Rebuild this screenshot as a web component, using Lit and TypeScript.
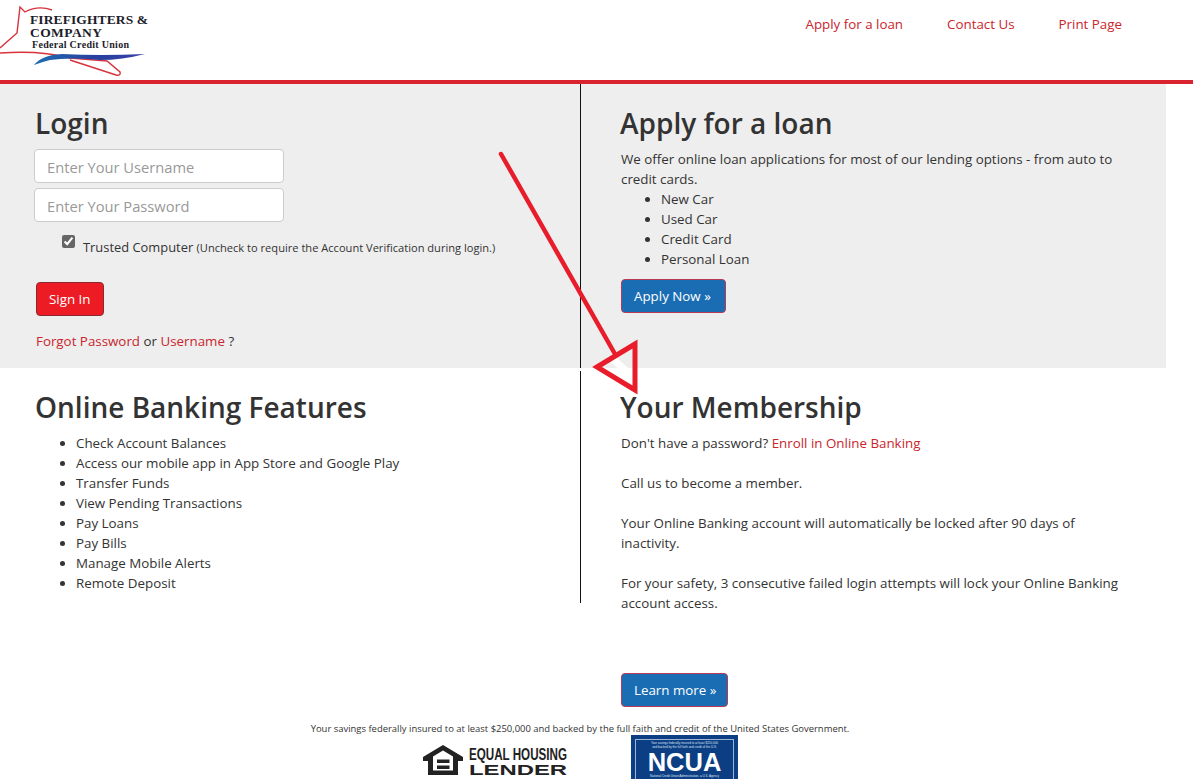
import { LitElement, html, css, svg } from 'lit';
import { customElement } from 'lit/decorators.js';

const FEATURES = [
  'Check Account Balances',
  'Access our mobile app in App Store and Google Play',
  'Transfer Funds',
  'View Pending Transactions',
  'Pay Loans',
  'Pay Bills',
  'Manage Mobile Alerts',
  'Remote Deposit',
];

const LOANS = ['New Car', 'Used Car', 'Credit Card', 'Personal Loan'];

const logo = svg`
  <svg class="logo" width="150" height="80" viewBox="0 0 150 80">
    <defs>
      <linearGradient id="swoosh" x1="0" x2="1" y1="0" y2="0">
        <stop offset="0" stop-color="#1f6fb0" />
        <stop offset="0.55" stop-color="#27409f" />
        <stop offset="1" stop-color="#3a3fa8" />
      </linearGradient>
    </defs>
    <path d="M0 48 L17 33 L20 7 L25 12 Q38 5 52 10" fill="none" stroke="#d8323c" stroke-width="1.4" />
    <path d="M0 53 Q40 50 70 58 L107 61 L120 72 Q121 76 116 75 L70 60" fill="none" stroke="#d8323c" stroke-width="1.4" />
    <path d="M34 65 Q42 55 62 54 Q100 56 145 54 Q122 60 100 60 Q70 57 50 60 Q42 62 34 65 Z" fill="url(#swoosh)" />
    <text x="30" y="24" class="l1" textLength="118" lengthAdjust="spacing">FIREFIGHTERS &amp;</text>
    <text x="30" y="37" class="l1" textLength="72" lengthAdjust="spacing">COMPANY</text>
    <text x="32" y="48" class="l2" textLength="97" lengthAdjust="spacing">Federal Credit Union</text>
  </svg>
`;

const housing = svg`
  <svg class="ehl" width="146" height="34" viewBox="0 0 146 34">
    <path d="M20 2 L40 14 L40 18 L35 18 L35 32 L5 32 L5 18 L0 18 L0 14 Z M20 7.5 L10 13.5 L10 27.5 L30 27.5 L30 13.5 Z" fill="#222" fill-rule="evenodd" />
    <rect x="14" y="16.5" width="12.5" height="3.5" fill="#222" />
    <rect x="14" y="22.5" width="12.5" height="3.5" fill="#222" />
    <text x="46" y="17" class="e1" textLength="98" lengthAdjust="spacingAndGlyphs">EQUAL HOUSING</text>
    <text x="46" y="32" class="e2" textLength="98" lengthAdjust="spacingAndGlyphs">LENDER</text>
  </svg>
`;

const arrow = svg`
  <svg class="arrow" width="1193" height="779" viewBox="0 0 1193 779">
    <path d="M615 356 L628 368 L623 372 L610 362 Z" fill="#fff" />
    <path d="M501 154 L615 354" fill="none" stroke="#e81c2a" stroke-width="4.5" stroke-linecap="round" />
    <path d="M597 367 L635 344 L635 390 Z" fill="none" stroke="#e81c2a" stroke-width="5" />
  </svg>
`;

@customElement('app-root')
export class AppRoot extends LitElement {
  static styles = css`
    :host {
      display: block;
      position: relative;
      height: 779px;
      overflow: hidden;
      background: #fff;
      color: #333;
      font-family: 'Open Sans', 'Noto Sans', sans-serif;
      font-size: 13.35px;
      line-height: 20px;
    }

    a {
      color: #c9252d;
      text-decoration: none;
    }

    header {
      display: flex;
      justify-content: space-between;
      height: 80px;
      border-bottom: 4px solid #d9232e;
    }

    .logo {
      display: block;
    }

    .logo .l1 {
      font: bold 13.5px 'Liberation Serif', serif;
      fill: #1d1d2b;
    }

    .logo .l2 {
      font: bold 10px 'Liberation Serif', serif;
      fill: #1d1d2b;
    }

    nav {
      display: flex;
      gap: 44px;
      padding: 14px 71px 0 0;
    }

    .row {
      display: grid;
      grid-template-columns: 581px 1fr;
      width: 1166px;
    }

    .row.top {
      background: #eee;
      height: 284px;
    }

    .left {
      padding-left: 36px;
      border-right: 1px solid #111;
    }

    .right {
      padding: 0 40px;
    }

    .top .left,
    .top .right {
      padding-top: 19px;
    }

    .bottom {
      padding-top: 3px;
    }

    .bottom .left {
      height: 216px;
      padding-top: 16px;
    }

    .bottom .right {
      padding-top: 16px;
    }

    h2 {
      margin: 0 0 6px -1px;
      font-size: 28px;
      font-weight: 600;
      line-height: 40px;
      color: #333;
    }

    p {
      margin: 0;
    }

    ul {
      margin: 0;
      padding-left: 40px;
    }

    .form {
      display: flex;
      flex-direction: column;
      gap: 5px;
      margin: 2px 0 0 -2px;
    }

    input.text {
      box-sizing: border-box;
      width: 250px;
      height: 34px;
      padding: 1px 12px 0;
      border: 1px solid #ccc;
      border-radius: 4px;
      background: #fff;
      font: inherit;
      font-size: 14.7px;
    }

    input.text::placeholder {
      color: #999;
    }

    .trust {
      display: flex;
      align-items: flex-start;
      margin: 15px 0 0 26px;
      font-size: 12.9px;
    }

    .trust input {
      width: 13px;
      height: 13px;
      margin: -2px 8px 0 0;
      accent-color: #666;
    }

    .trust small {
      font-size: 11.1px;
    }

    .btn {
      display: inline-block;
      box-sizing: border-box;
      height: 34px;
      padding: 0 12px;
      border: 1px solid #b83a55;
      border-radius: 4px;
      background: #1a6db3;
      color: #fff;
      line-height: 32px;
    }

    .btn.red {
      background: #ed1c24;
      border-color: #8a2a30;
    }

    .signin {
      margin: 24px 0 15px;
    }

    .apply {
      margin-top: 10px;
    }

    .apply .btn {
      padding-right: 14px;
    }

    .gap {
      margin-top: 20px;
    }

    .more {
      margin-top: 60px;
    }

    .more .btn {
      padding-right: 11px;
    }

    footer {
      width: 1160px;
      margin-top: 14px;
      text-align: center;
      font-size: 9.45px;
      line-height: 16px;
    }

    .logos {
      display: flex;
      align-items: flex-start;
      gap: 62px;
      margin: -2px 0 0 423px;
    }

    .ehl {
      display: block;
      margin-top: 8px;
    }

    .ehl .e1 {
      font: bold 16px 'Liberation Sans', sans-serif;
      fill: #222;
    }

    .ehl .e2 {
      font: bold 15.5px 'Liberation Sans', sans-serif;
      fill: #222;
    }

    .ncua {
      box-sizing: border-box;
      width: 107px;
      height: 50px;
      padding: 4px;
      background: #0b3e83;
      color: #dbe4f2;
      text-align: center;
      font-family: 'Liberation Sans', sans-serif;
    }

    .ncua div {
      box-sizing: border-box;
      height: 100%;
      padding-top: 1px;
      border: 1px solid #9db4d6;
      font-size: 3px;
      line-height: 4px;
      white-space: nowrap;
      overflow: hidden;
    }

    .ncua b {
      display: block;
      margin: 2px 0 1px;
      color: #fff;
      font-size: 25.5px;
      line-height: 22px;
    }

    .arrow {
      position: absolute;
      top: 0;
      left: 0;
      pointer-events: none;
    }
  `;

  render() {
    return html`
      <header>
        ${logo}
        <nav>
          <a href="#">Apply for a loan</a>
          <a href="#">Contact Us</a>
          <a href="#">Print Page</a>
        </nav>
      </header>

      <section class="row top">
        <div class="left">
          <h2>Login</h2>
          <div class="form">
            <input class="text" placeholder="Enter Your Username" />
            <input class="text" placeholder="Enter Your Password" />
          </div>
          <label class="trust">
            <input type="checkbox" checked />
            <span>Trusted Computer <small>(Uncheck to require the Account Verification during login.)</small></span>
          </label>
          <div class="signin"><a class="btn red" href="#">Sign In</a></div>
          <p><a href="#">Forgot Password</a> or <a href="#">Username</a> ?</p>
        </div>
        <div class="right">
          <h2>Apply for a loan</h2>
          <p>We offer online loan applications for most of our lending options - from auto to credit cards.</p>
          <ul>
            ${LOANS.map((l) => html`<li>${l}</li>`)}
          </ul>
          <div class="apply"><a class="btn" href="#">Apply Now »</a></div>
        </div>
      </section>

      <section class="row bottom">
        <div class="left">
          <h2>Online Banking Features</h2>
          <ul>
            ${FEATURES.map((f) => html`<li>${f}</li>`)}
          </ul>
        </div>
        <div class="right">
          <h2>Your Membership</h2>
          <p>Don't have a password? <a href="#">Enroll in Online Banking</a></p>
          <p class="gap">Call us to become a member.</p>
          <p class="gap">Your Online Banking account will automatically be locked after 90 days of inactivity.</p>
          <p class="gap">For your safety, 3 consecutive failed login attempts will lock your Online Banking account access.</p>
          <div class="more"><a class="btn" href="#">Learn more »</a></div>
        </div>
      </section>

      <footer>
        Your savings federally insured to at least $250,000 and backed by the full faith and credit of the United States Government.
        <div class="logos">
          ${housing}
          <div class="ncua">
            <div>
              Your savings federally insured to at least $250,000<br />
              and backed by the full faith and credit of the U.S.
              <b>NCUA</b>
              National Credit Union Administration, a U.S. Agency
            </div>
          </div>
        </div>
      </footer>

      ${arrow}
    `;
  }
}

declare global {
  interface HTMLElementTagNameMap {
    'app-root': AppRoot;
  }
}
